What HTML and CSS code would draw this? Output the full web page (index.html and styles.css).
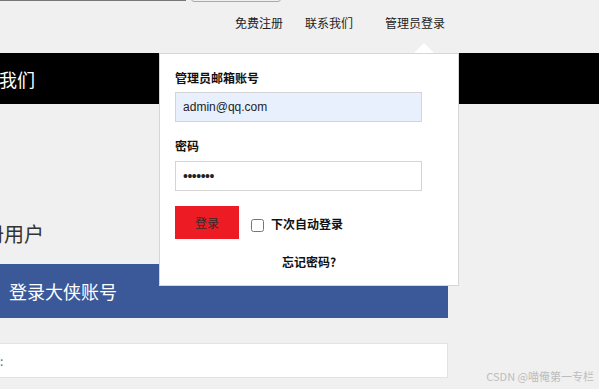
FILE: index.html
```html
<!DOCTYPE html>
<html lang="zh-CN">
  <head>
    <meta charset="UTF-8" />
    <meta name="viewport" content="width=device-width, initial-scale=1.0" />
    <title>大侠登录</title>
    <link rel="stylesheet" href="styles.css">
  </head>
  <body>
    <div class="search">
      <input type="text" class="search-input" />
      <button class="search-btn"></button>
    </div>

    <ul class="nav">
      <li class="nav-item"><a href="#">免费注册</a></li>
      <li class="nav-item"><a href="#">联系我们</a></li>
      <li class="nav-item admin">
        <a href="#">管理员登录</a>
        <span class="caret"></span>
        <form class="admin-panel">
          <label for="adminEmail">管理员邮箱账号</label>
          <input type="text" id="adminEmail" class="email" value="admin@qq.com" />
          <label for="adminPwd" class="pwd-label">密码</label>
          <input type="password" id="adminPwd" value="1234567" />
          <div class="panel-row">
            <button type="button" class="login-btn">登录</button>
            <input type="checkbox" id="remember" />
            <label for="remember" class="remember">下次自动登录</label>
          </div>
          <a href="#" class="forget">忘记密码?</a>
        </form>
      </li>
    </ul>

    <div class="topbar">
      <span class="topbar-title">联系我们</span>
    </div>

    <div class="main">
      <h2>注册用户</h2>
      <div class="hero-bar">登录大侠账号</div>
      <div class="field-box">账号:</div>
    </div>

    <div class="watermark">CSDN @喵俺第一专栏</div>
  </body>
</html>
```

FILE: styles.css
```css
* {
  margin: 0;
  padding: 0;
  box-sizing: border-box;
  font-family: "Noto Sans CJK SC", "Microsoft YaHei", sans-serif;
}

body {
  background: #f0f0f0;
  color: #333;
  overflow: hidden;
}

a {
  color: #222;
  text-decoration: none;
}

/* search row, scrolled mostly off the top */
.search {
  display: flex;
  align-items: flex-start;
  height: 23px;
  margin-top: -22px;
}

.search-input {
  width: 186px;
  height: 23px;
  border: 1px solid #777;
  background: #fff;
}

.search-btn {
  width: 90px;
  height: 24px;
  margin-left: 5px;
  border: 1px solid #aaa;
  border-radius: 3px;
  background: #efefef;
}

.nav {
  list-style: none;
  display: flex;
  height: 52px;
  padding-left: 224px;
  position: relative;
  z-index: 2;
}

.nav-item {
  padding: 13px 11px 0;
  font-size: 12px;
  line-height: 18px;
}

.nav-item.admin {
  position: relative;
  padding-left: 21px;
}

.caret {
  position: absolute;
  left: 50px;
  top: 42px;
  width: 0;
  height: 0;
  border-left: 10px solid transparent;
  border-right: 10px solid transparent;
  border-bottom: 10px solid #fff;
}

.admin-panel {
  position: absolute;
  left: -205px;
  top: 52px;
  width: 300px;
  height: 233px;
  background: #fff;
  border: 1px solid #d6d6d6;
  padding: 16px 15px 0;
  display: flex;
  flex-direction: column;
}

.admin-panel label {
  font-size: 12px;
  line-height: 16px;
  font-weight: bold;
  color: #111;
}

.admin-panel input[type="text"],
.admin-panel input[type="password"] {
  width: 247px;
  height: 30px;
  margin-top: 6px;
  padding: 0 7px;
  border: 1px solid #d4d4d4;
  font-family: "Liberation Sans", sans-serif;
  font-size: 12px;
  color: #222;
  outline: none;
}

.admin-panel .email {
  background: #e8f0fe;
}

.admin-panel .pwd-label {
  margin-top: 16px;
}

.admin-panel input[type="password"] {
  margin-top: 7px;
  font-size: 14px;
  letter-spacing: -0.5px;
}

.panel-row {
  display: flex;
  align-items: center;
  margin-top: 15px;
}

.login-btn {
  width: 64px;
  height: 33px;
  border: none;
  background: #ed1c24;
  color: #3a2a2a;
  font-size: 12px;
}

.panel-row input[type="checkbox"] {
  width: 13px;
  height: 13px;
  margin: 6px 7px 0 12px;
}

.panel-row .remember {
  margin-top: 3px;
}

.forget {
  align-self: center;
  margin-top: 15px;
  font-size: 12px;
  line-height: 16px;
  font-weight: bold;
  color: #111;
}

.topbar {
  background: #000;
  height: 51px;
  display: flex;
  align-items: center;
}

.topbar-title {
  margin-left: -37px;
  color: #fff;
  font-size: 18px;
}

.main {
  width: 484px;
  margin-left: -36px;
}

.main h2 {
  margin-top: 115px;
  font-size: 20px;
  font-weight: normal;
  line-height: 30px;
  color: #333;
}

.hero-bar {
  margin-top: 15px;
  height: 54px;
  line-height: 54px;
  padding-left: 45px;
  background: #3b5998;
  color: #fff;
  font-size: 18px;
}

.field-box {
  margin-top: 25px;
  height: 35px;
  line-height: 33px;
  padding-left: 11px;
  background: #fff;
  border: 1px solid #e3e3e3;
  font-size: 12px;
  color: #666;
}

.watermark {
  position: absolute;
  right: 5px;
  bottom: 5px;
  font-size: 11px;
  color: #bdbdbd;
}
```
